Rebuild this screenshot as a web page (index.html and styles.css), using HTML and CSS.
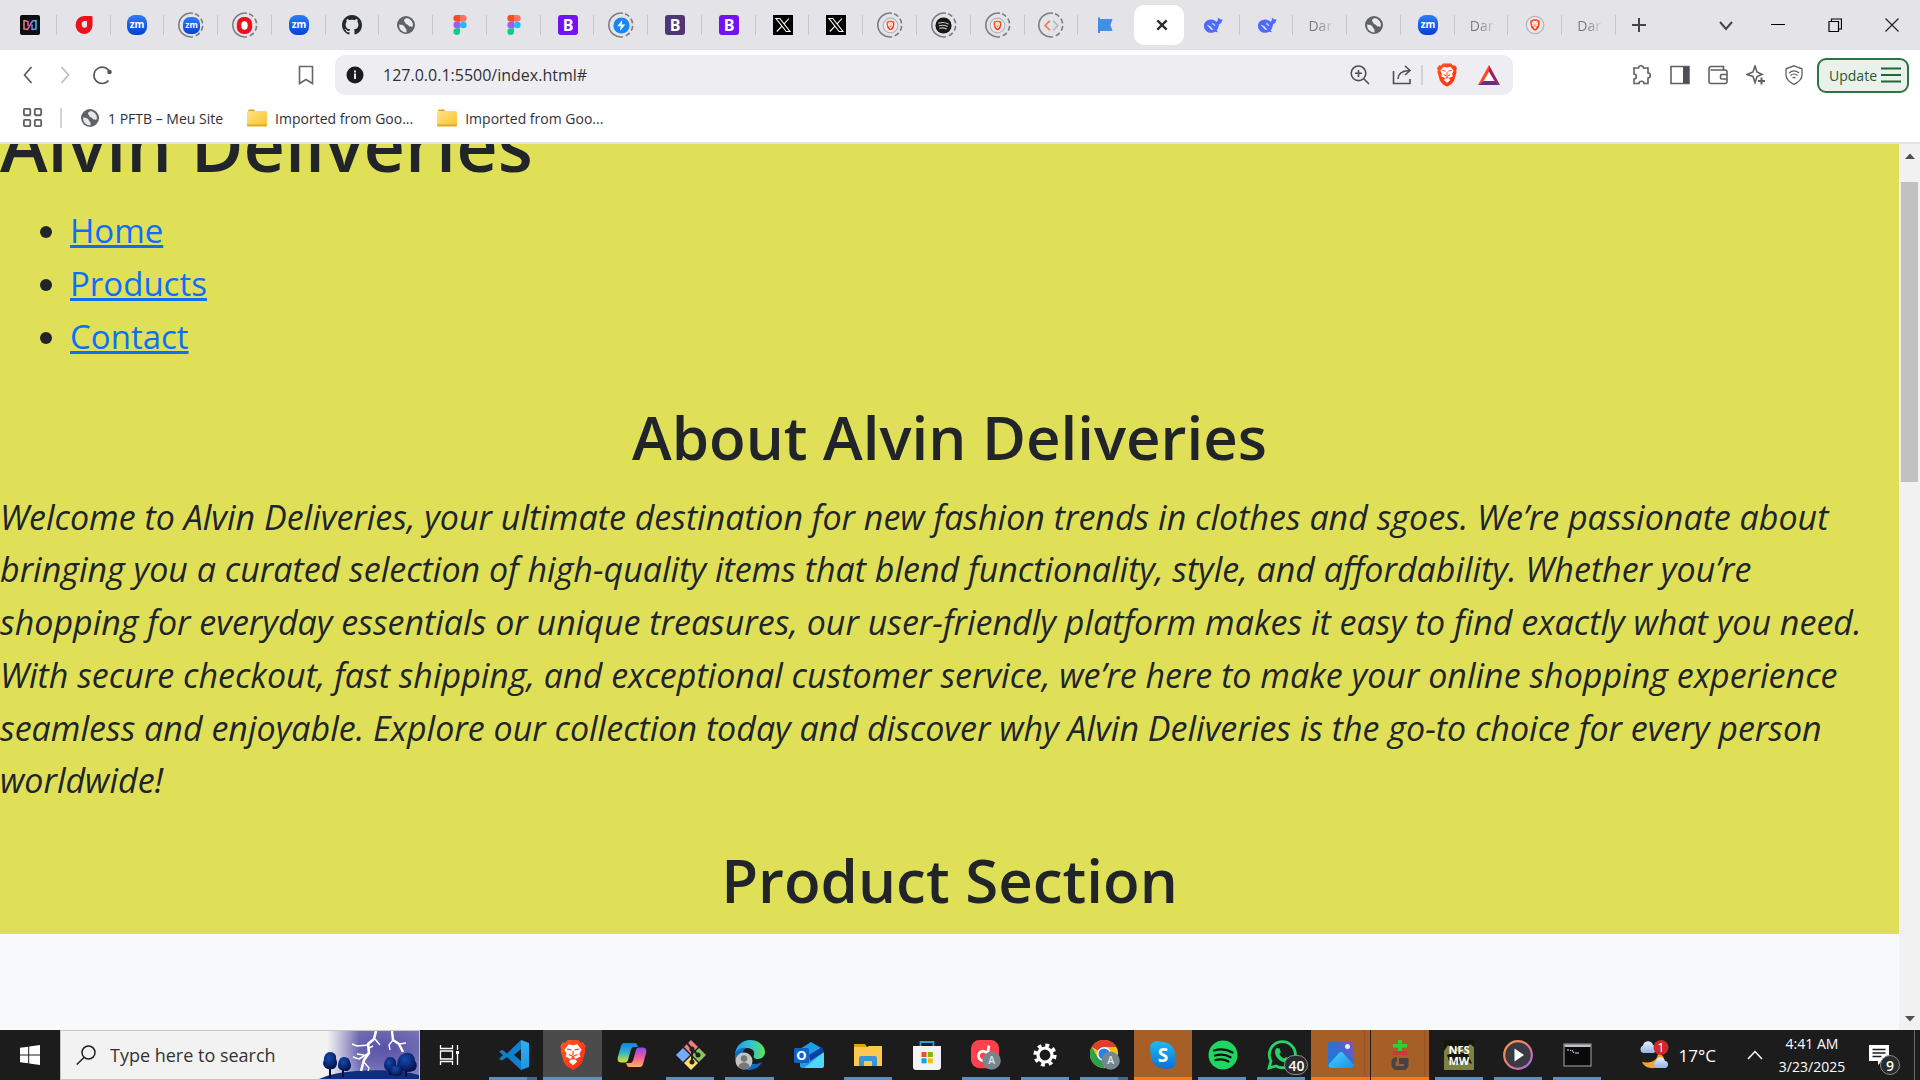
FILE: index.html
```html
<!DOCTYPE html>
<html lang="en">
<head>
<meta charset="utf-8">
<meta name="viewport" content="width=device-width, initial-scale=1">
<title>Alvin Deliveries</title>
<link rel="stylesheet" href="styles.css">
</head>
<body>

<svg class="sprite" aria-hidden="true">
  <defs>
    <linearGradient id="g-zoom" x1="0" y1="0" x2="0" y2="1"><stop offset="0" stop-color="#2d7bff"/><stop offset="1" stop-color="#0542d0"/></linearGradient>
    <linearGradient id="g-hevc" x1="0" y1="0" x2="1" y2="0"><stop offset="0" stop-color="#f5805a"/><stop offset=".5" stop-color="#c05ac8"/><stop offset="1" stop-color="#35c0ea"/></linearGradient>
    <linearGradient id="g-folder" x1="0" y1="0" x2="1" y2="1"><stop offset="0" stop-color="#ffe484"/><stop offset="1" stop-color="#f9c22e"/></linearGradient>
    <linearGradient id="g-brave" x1="0" y1="0" x2="1" y2="1"><stop offset="0" stop-color="#ff5a1f"/><stop offset="1" stop-color="#ff2a12"/></linearGradient>
    <linearGradient id="g-cop1" x1="0" y1="0" x2="0" y2="1"><stop offset="0" stop-color="#1a7bea"/><stop offset=".5" stop-color="#2fb6c9"/><stop offset="1" stop-color="#e8dc2a"/></linearGradient>
    <linearGradient id="g-cop2" x1="0" y1="0" x2="0" y2="1"><stop offset="0" stop-color="#8a4bea"/><stop offset=".5" stop-color="#f05a9a"/><stop offset="1" stop-color="#ffb05a"/></linearGradient>
    <linearGradient id="g-edge" x1="0" y1="0" x2="1" y2="0"><stop offset="0" stop-color="#1c9be8"/><stop offset=".5" stop-color="#2fc3d6"/><stop offset="1" stop-color="#5ee05a"/></linearGradient>
    <linearGradient id="g-skype" x1="0" y1="0" x2="0" y2="1"><stop offset="0" stop-color="#1ebcf5"/><stop offset="1" stop-color="#0a6fd8"/></linearGradient>
    <linearGradient id="g-photo" x1="0" y1="1" x2="1" y2="0"><stop offset="0" stop-color="#1b7ae0"/><stop offset=".5" stop-color="#2f6fd0"/><stop offset="1" stop-color="#8a4fc0"/></linearGradient>
    <linearGradient id="g-mount" x1="0" y1="0" x2="1" y2="1"><stop offset="0" stop-color="#4ad4fa"/><stop offset="1" stop-color="#1a90ea"/></linearGradient>
    <linearGradient id="g-play" x1="0" y1="0" x2="1" y2="1"><stop offset="0" stop-color="#ff9a3c"/><stop offset=".5" stop-color="#e87a7a"/><stop offset="1" stop-color="#a06af0"/></linearGradient>
    <linearGradient id="g-cloud" x1="0" y1="0" x2="0" y2="1"><stop offset="0" stop-color="#e8f0fc"/><stop offset="1" stop-color="#92b4ea"/></linearGradient>
    <linearGradient id="g-vs" x1="0" y1="0" x2="0" y2="1"><stop offset="0" stop-color="#2cb0f5"/><stop offset="1" stop-color="#1f94e0"/></linearGradient>
    <radialGradient id="g-storm" cx=".62" cy=".35" r=".75"><stop offset="0" stop-color="#5a52a8"/><stop offset=".5" stop-color="#6f6ab2"/><stop offset="1" stop-color="#8e8cc6"/></radialGradient>
    <linearGradient id="g-haze" x1="0" y1="0" x2="1" y2="0"><stop offset="0" stop-color="#f2f2f2"/><stop offset=".35" stop-color="#f2f2f2" stop-opacity="0"/></linearGradient>
    <radialGradient id="g-tree" cx=".4" cy=".35" r=".7"><stop offset="0" stop-color="#154bb4"/><stop offset="1" stop-color="#050f44"/></radialGradient>
  </defs>

  <symbol id="ring" viewBox="0 0 26 26"><path d="M15 1.200A12 12 0 1 0 15 24.800" fill="none" stroke="#7c7d82" stroke-width="1.600"/><path d="M17 1.800A12 12 0 0 1 17 24.200" fill="none" stroke="#7c7d82" stroke-width="1.600" stroke-dasharray="5 2.600"/></symbol>
  <symbol id="hevc" viewBox="0 0 20 20"><rect width="20" height="20" rx="2" fill="#0d0d12"/><path d="M8 11V6.500L4 5.500V14l3.500.5L12.500 6l3.500-.5V14l-4 .5V9.500" fill="none" stroke="url(#g-hevc)" stroke-width="1.500" stroke-linejoin="round"/></symbol>
  <symbol id="drop" viewBox="0 0 20 20"><path d="M10 1h7.500a1 1 0 0 1 1 1v9A8.500 9 0 1 1 10 1z" fill="#ee0f1c"/><path d="M11 6h2v5.500a3 3.400 0 1 1-2-5.500z" fill="#e4e3e8"/></symbol>
  <symbol id="ored" viewBox="0 0 20 20"><rect x="1" y="0" width="18" height="20" rx="8" fill="#ee0f1c"/><ellipse cx="10" cy="10" rx="3.800" ry="5" fill="#fff"/></symbol>
  <symbol id="zoom" viewBox="0 0 20 20"><rect width="20" height="20" rx="8" fill="url(#g-zoom)"/></symbol>
  <symbol id="github" viewBox="0 0 16 16"><path fill="#24292f" d="M8 0C3.580 0 0 3.580 0 8c0 3.540 2.290 6.530 5.470 7.590.4.070.55-.17.55-.38 0-.19-.01-.82-.01-1.490-2.010.37-2.530-.49-2.690-.94-.09-.23-.48-.94-.82-1.130-.28-.15-.68-.52-.01-.53.63-.01 1.080.58 1.230.82.72 1.210 1.870.87 2.330.66.07-.52.28-.87.51-1.070-1.780-.2-3.640-.89-3.640-3.950 0-.87.31-1.590.82-2.150-.08-.2-.36-1.020.08-2.120 0 0 .67-.21 2.200.82.64-.18 1.320-.27 2-.27s1.360.09 2 .27c1.530-1.040 2.200-.82 2.200-.82.44 1.100.16 1.920.08 2.120.51.56.82 1.270.82 2.150 0 3.070-1.870 3.750-3.650 3.950.29.25.54.73.54 1.480 0 1.070-.01 1.930-.01 2.200 0 .21.15.46.55.38A8.010 8.010 0 0 0 16 8c0-4.420-3.580-8-8-8z"/></symbol>
  <symbol id="globe" viewBox="0 0 20 20"><circle cx="10" cy="10" r="9" fill="#5f6368"/><path d="M3 9.500c3 .2 5.500 1 6 3 .3 1.300 1.500 1 1.500 2.500v2.500A7.500 7.500 0 0 1 3 9.500zM10.500 3c-1 1-2.500 1-2.500 2.500S9.500 7 9.500 8.200 12 9 12.500 10.500s2.500.5 3.500 1.500l1-1.500A7.500 7.500 0 0 0 10.500 3z" fill="#e8e7ec"/></symbol>
  <symbol id="figma" viewBox="0 0 14 20"><path d="M7 0H3.700a3.300 3.300 0 0 0 0 6.700H7z" fill="#f24e1e"/><path d="M7 0h3.300a3.300 3.300 0 0 1 0 6.700H7z" fill="#ff7262"/><path d="M7 6.700H3.700a3.300 3.300 0 0 0 0 6.600H7z" fill="#a259ff"/><circle cx="10.300" cy="10" r="3.300" fill="#1abcfe"/><path d="M7 13.300H3.700A3.300 3.300 0 1 0 7 16.700z" fill="#0acf83"/></symbol>
  <symbol id="bolt" viewBox="0 0 20 20"><circle cx="10" cy="10" r="9.500" fill="#1687f8"/><path d="M11 3.500L5 11h4.200L8 16.500l6.500-7.800h-4.300z" fill="#fff"/></symbol>
  <symbol id="x" viewBox="0 0 20 20"><rect width="20" height="20" fill="#000"/><path d="M3 3.500h3.800L17 16.500h-3.800zM16 3.500l-5.200 5.700M9 11.200l-5.200 5.300" fill="none" stroke="#fff" stroke-width="1.100"/></symbol>
  <symbol id="brave-face" viewBox="0 0 24 28"><path d="M12 0h5l2 2.500 2.500-.3L24 6l-1 2.500.5 2-3 10.500-3.500 4-5 3-5-3-3.500-4L.5 10.500l.5-2L0 6l2.500-3.800 2.500.3L7 0z" fill="url(#g-brave)"/><path d="M12 5l4-1 4 5-2 3.500 1 3-5 2.500 2 2-4 3.500L8 20l2-2-5-2.500 1-3L4 9l4-5z" fill="#fff"/><path d="M6.500 8.500l4 .8M17.500 8.500l-4 .8M12 10v4M8 13.500l4 2 4-2M10.500 17.500L12 16l1.500 1.500z" stroke="#ff4a1c" stroke-width="1.200" fill="none"/></symbol>
  <symbol id="brave-ring" viewBox="0 0 20 20"><circle cx="10" cy="10" r="8.700" fill="#e9eaee" stroke="#b3b5bd" stroke-width="1.300"/><use href="#brave-face" x="5" y="4" width="10" height="12"/></symbol>
  <symbol id="spotify-dark" viewBox="0 0 20 20"><circle cx="10" cy="10" r="9.500" fill="#161616"/><path d="M4.500 7.200c4-1.200 8-.8 11 1M5 10.300c3.500-1 7-.6 9.500.9M5.500 13.200c3-.8 5.500-.4 8 .8" stroke="#c9c9cd" stroke-width="1.300" fill="none" stroke-linecap="round"/></symbol>
  <symbol id="code" viewBox="0 0 20 20"><path d="M8 4.500L2.500 10 8 15.500" stroke="#ee7b4c" stroke-width="2" fill="none"/><path d="M12 4.500l5.500 5.500-5.500 5.500" stroke="#b9b9bf" stroke-width="2" fill="none"/></symbol>
  <symbol id="flag" viewBox="0 0 20 20"><path d="M3 2.500h2V4h12.500L15.500 10l2 6H5v2H3z" fill="#4090e8"/></symbol>
  <symbol id="whale" viewBox="0 0 22 20"><path d="M21.500 3.500c-1.500.8-2.500.3-3.500-.5-1-.9-1.800-1-1.800-1s.6 3.500-1.200 4.500c-1.500-1.300-3.500-2.500-6-2.500C4 4 1 7.500 1 11s3 7.500 7.500 7.500c2 0 3.500-.5 4.500-1.200l3.500.7-1.500-2.300c1.500-1.700 2.500-4 2.500-6.200 2-.5 3.500-2.500 4-6z" fill="#4d6bfe"/><path d="M4 10c2.500-.3 4.500 1.500 5.500 3s1.500 2 2.200 2.300c-2.200.7-3.700-.8-4.700-2.300S5 11 4 10z" fill="#e4e3e8"/><path d="M10 8.500c1.500 0 2.500 1 3 2.500" stroke="#e4e3e8" stroke-width="1.200" fill="none"/></symbol>
  <symbol id="folder" viewBox="0 0 20 18"><path d="M1 2a1.500 1.500 0 0 1 1.500-1.500H7L9 3h-8z" fill="#dca01c"/><rect x="0" y="2" width="20" height="15" rx="1.500" fill="url(#g-folder)"/><path d="M0 15.500h20v.8a1.300 1.300 0 0 1-1.300 1.300H1.300A1.300 1.300 0 0 1 0 16.300z" fill="#e0a928"/></symbol>
</svg>

<header class="browser">
  <div class="tabstrip">
    <nav class="tabs" aria-label="Open tabs">
      <button class="tab"><svg class="fav"><use href="#hevc"/></svg></button>
      <button class="tab"><svg class="fav"><use href="#drop"/></svg></button>
      <button class="tab"><svg class="fav" viewBox="0 0 20 20"><use href="#zoom"/><text x="10" y="13" class="zm">zm</text></svg></button>
      <button class="tab asleep"><svg class="fav" viewBox="0 0 20 20"><use href="#zoom"/><text x="10" y="13" class="zm">zm</text></svg><svg class="ring"><use href="#ring"/></svg></button>
      <button class="tab asleep"><svg class="fav"><use href="#ored"/></svg><svg class="ring"><use href="#ring"/></svg></button>
      <button class="tab"><svg class="fav" viewBox="0 0 20 20"><use href="#zoom"/><text x="10" y="13" class="zm">zm</text></svg></button>
      <button class="tab"><svg class="fav"><use href="#github"/></svg></button>
      <button class="tab"><svg class="fav"><use href="#globe"/></svg></button>
      <button class="tab"><svg class="fav"><use href="#figma"/></svg></button>
      <button class="tab"><svg class="fav"><use href="#figma"/></svg></button>
      <button class="tab"><svg class="fav" viewBox="0 0 20 20"><rect width="20" height="20" rx="3" fill="#7411f5"/><text x="10" y="16" class="letter-b">B</text></svg></button>
      <button class="tab asleep"><svg class="fav"><use href="#bolt"/></svg><svg class="ring"><use href="#ring"/></svg></button>
      <button class="tab"><svg class="fav" viewBox="0 0 20 20"><rect width="20" height="20" rx="3" fill="#503675"/><text x="10" y="16" class="letter-b">B</text></svg></button>
      <button class="tab"><svg class="fav" viewBox="0 0 20 20"><rect width="20" height="20" rx="3" fill="#7411f5"/><text x="10" y="16" class="letter-b">B</text></svg></button>
      <button class="tab"><svg class="fav"><use href="#x"/></svg></button>
      <button class="tab"><svg class="fav"><use href="#x"/></svg></button>
      <button class="tab asleep"><svg class="fav"><use href="#brave-ring"/></svg><svg class="ring"><use href="#ring"/></svg></button>
      <button class="tab asleep"><svg class="fav"><use href="#spotify-dark"/></svg><svg class="ring"><use href="#ring"/></svg></button>
      <button class="tab asleep"><svg class="fav"><use href="#brave-ring"/></svg><svg class="ring"><use href="#ring"/></svg></button>
      <button class="tab asleep"><svg class="fav"><use href="#code"/></svg><svg class="ring"><use href="#ring"/></svg></button>
      <button class="tab bare"><svg class="fav"><use href="#flag"/></svg></button>
      <button class="tab active" aria-label="Close tab"><svg class="close" viewBox="0 0 12 12"><path d="M2 2l8 8M10 2l-8 8"/></svg></button>
      <button class="tab"><svg class="fav"><use href="#whale"/></svg></button>
      <button class="tab"><svg class="fav"><use href="#whale"/></svg></button>
      <button class="tab"><span class="tab-title">Dar</span></button>
      <button class="tab"><svg class="fav"><use href="#globe"/></svg></button>
      <button class="tab"><svg class="fav" viewBox="0 0 20 20"><use href="#zoom"/><text x="10" y="13" class="zm">zm</text></svg></button>
      <button class="tab"><span class="tab-title">Dar</span></button>
      <button class="tab"><svg class="fav"><use href="#brave-ring"/></svg></button>
      <button class="tab"><span class="tab-title">Dar</span></button>
    </nav>
    <div class="window-controls">
      <button class="new-tab" aria-label="New tab"><svg viewBox="0 0 14 14"><path d="M7 0v14M0 7h14" stroke="#44454a" stroke-width="2"/></svg></button>
      <button class="tab-search" aria-label="Search tabs"><svg viewBox="0 0 14 14"><path d="M1 4l6 7 6-7" fill="none" stroke="#44454a" stroke-width="2"/></svg></button>
      <button class="win" aria-label="Minimize"><svg viewBox="0 0 14 14"><path d="M0 6.500h14" stroke="#000" stroke-width="1"/></svg></button>
      <button class="win" aria-label="Restore"><svg viewBox="0 0 14 14"><path d="M1 3.500h9.500v10H1zM3.500 3V1h10v10H11" fill="none" stroke="#000" stroke-width="1.200"/></svg></button>
      <button class="win" aria-label="Close"><svg viewBox="0 0 14 14"><path d="M.5.500l13 13M13.500.500l-13 13" stroke="#222" stroke-width="1.200"/></svg></button>
    </div>
  </div>

  <div class="toolbar">
    <div class="nav-buttons">
      <button class="tool" aria-label="Back"><svg viewBox="0 0 20 20"><path d="M13.500 2L6.500 10l7 8" stroke="#55565c"/></svg></button>
      <button class="tool" aria-label="Forward"><svg viewBox="0 0 20 20"><path d="M6.500 2l7 8-7 8" stroke="#b9b9bf"/></svg></button>
      <button class="tool" aria-label="Reload"><svg viewBox="0 0 20 20"><path d="M16.500 15.500A8.200 8.200 0 1 1 18 8" stroke="#55565c"/><circle cx="17.500" cy="7" r="2.300" fill="#55565c" stroke="none"/></svg></button>
    </div>
    <button class="tool bookmark" aria-label="Bookmark this page"><svg viewBox="0 0 20 20"><path d="M3.500 1.500h13V18.500L10 14.500l-6.500 4z" stroke="#66676d"/></svg></button>
    <div class="omnibox">
      <svg class="info" viewBox="0 0 18 18"><circle cx="9" cy="9" r="8.500" fill="#1b1b20"/><path d="M9 7.500V13M9 4.500v2" stroke="#fff" stroke-width="1.800"/></svg>
      <input type="text" aria-label="Address" value="127.0.0.1:5500/index.html#">
      <button class="tool" aria-label="Zoom"><svg viewBox="0 0 20 20"><path d="M13.500 13.500L19 19M8.500 1a7.300 7.300 0 1 1 0 14.600A7.300 7.300 0 0 1 8.500 1zM5 8.300h7M8.500 5v7" stroke="#4e4f56"/></svg></button>
      <button class="tool" aria-label="Share"><svg viewBox="0 0 20 20"><path d="M1.500 6v12.500h16.500V14M6 14c0-5 3-8 11-8.500M13 1l5 4.500-5 4.500" stroke="#4e4f56"/></svg></button>
      <span class="rule"></span>
      <button class="tool shield" aria-label="Brave Shields"><svg viewBox="0 0 24 28"><use href="#brave-face"/></svg></button>
      <button class="tool bat" aria-label="Rewards"><svg viewBox="0 0 22 20"><path d="M11 0L0 20l6-3.500L11 7z" fill="#ff4724"/><path d="M11 0l11 20-6-3.500L11 7z" fill="#9e1f63"/><path d="M0 20h22l-6-4H6z" fill="#662d91"/><path d="M11 7l5.500 9h-11z" fill="#fff"/></svg></button>
    </div>
    <div class="extensions">
      <button class="tool" aria-label="Extensions"><svg viewBox="0 0 20 20"><path d="M2 3h4.500c0-3 5-3 5 0H16v5c3 0 3 5 0 5v5.500h-4c0-3-5-3-5 0H2V14c3 0 3-5 0-5z" stroke="#5f6067"/></svg></button>
      <button class="tool" aria-label="Sidebar"><svg viewBox="0 0 20 20"><path d="M1 1.500h18v17H1z" stroke="#5f6067"/><path d="M13 2h6v16h-6z" fill="#4f5057" stroke="none"/></svg></button>
      <button class="tool" aria-label="Wallet"><svg viewBox="0 0 20 20"><path d="M1 5v11.500a2 2 0 0 0 2 2h14a2 2 0 0 0 2-2V7a2 2 0 0 0-2-2H2.500M1 5V3.500a2 2 0 0 1 2-2h12.500V5M19 9.500h-5a1.500 1.500 0 0 0-1.500 1.500v1.500A1.500 1.500 0 0 0 14 14h5" stroke="#5f6067"/></svg></button>
      <button class="tool" aria-label="Leo"><svg viewBox="0 0 20 20"><path d="M9 1l2 6 5 2.500-5 2L9 17.500l-2-6-6-2L7 7z" stroke="#5f6067"/><path d="M15.500 12.500v7M12 16h7" stroke="#5f6067" stroke-width="2"/></svg></button>
      <button class="tool" aria-label="VPN"><svg viewBox="0 0 20 20"><path d="M10 .8l8 3v6c0 4.500-3.500 7.500-8 9.500-4.500-2-8-5-8-9.500v-6zM5 8c3-2.500 7-2.500 10 0M6.500 10.500c2-1.800 5-1.800 7 0M8.500 13c1-.8 2-.8 3 0" stroke="#5f6067" stroke-width="1.300"/></svg></button>
      <button class="update">Update<svg viewBox="0 0 20 16"><path d="M0 1.500h20M0 8h20M0 14.500h20" stroke="#1d6b32" stroke-width="2"/></svg></button>
    </div>
  </div>

  <nav class="bookmarks" aria-label="Bookmarks">
    <button class="apps" aria-label="Apps"><svg viewBox="0 0 22 22"><g fill="none" stroke="#5f6067" stroke-width="2"><rect x="1" y="1" width="7" height="7" rx="1"/><rect x="13" y="1" width="7" height="7" rx="1"/><rect x="1" y="13" width="7" height="7" rx="1"/><rect x="13" y="13" width="7" height="7" rx="1"/></g></svg></button>
    <span class="rule"></span>
    <a href="#"><svg><use href="#globe"/></svg>1 PFTB – Meu Site</a>
    <a href="#"><svg><use href="#folder"/></svg>Imported from Goo...</a>
    <a href="#"><svg><use href="#folder"/></svg>Imported from Goo...</a>
  </nav>
</header>

<div class="viewport">
  <main class="page">
    <div class="intro">
      <h1>Alvin Deliveries</h1>
      <ul>
        <li><a href="#">Home</a></li>
        <li><a href="#">Products</a></li>
        <li><a href="#">Contact</a></li>
      </ul>
      <h2>About Alvin Deliveries</h2>
      <p>Welcome to Alvin Deliveries, your ultimate destination for new fashion trends in clothes and sgoes. We’re passionate about bringing you a curated selection of high-quality items that blend functionality, style, and affordability. Whether you’re shopping for everyday essentials or unique treasures, our user-friendly platform makes it easy to find exactly what you need. With secure checkout, fast shipping, and exceptional customer service, we’re here to make your online shopping experience seamless and enjoyable. Explore our collection today and discover why Alvin Deliveries is the go-to choice for every person worldwide!</p>
      <h2>Product Section</h2>
    </div>
  </main>
  <div class="scrollbar" aria-hidden="true">
    <svg viewBox="0 0 10 6"><path d="M0 6l5-5.500L10 6z"/></svg>
    <div class="track"><div class="thumb"></div></div>
    <svg viewBox="0 0 10 6"><path d="M0 0l5 5.500L10 0z"/></svg>
  </div>
</div>

<footer class="taskbar">
  <button class="start" aria-label="Start"><svg viewBox="0 0 20 20"><path d="M0 2.800L8.200 1.700v7.800H0zM9.200 1.500L20 0v9.500H9.200zM0 10.500h8.200v7.800L0 17.200zM9.200 10.500H20V20L9.200 18.500z" fill="#fff"/></svg></button>
  <label class="search">
    <svg class="lens" viewBox="0 0 20 20"><circle cx="12.500" cy="7.500" r="6.500" fill="none" stroke="#222" stroke-width="1.500"/><path d="M8 12.500L.8 19.500" stroke="#222" stroke-width="1.500"/></svg>
    <input type="text" placeholder="Type here to search" aria-label="Search">
    <svg class="storm" viewBox="0 0 100 48">
      <rect x="8" width="92" height="48" fill="url(#g-storm)"/><rect x="8" width="92" height="48" fill="url(#g-haze)"/>
      <path d="M0 48c22-11 78-11 100-4v4z" fill="#0c2e80"/>
      <g fill="none" stroke="#fff" stroke-linejoin="round"><path d="M57 0l-2 8-6 5 1 9-5 7-3 11" stroke-width="2.600"/><path d="M50 14l-12 1-5-2M50 22l-10 6-6-2M45 24l-7-1M56 8l5 6M50 17l4-2" stroke-width="1.500"/><path d="M44 30l6 7-1 3" stroke-width="1.200"/><path d="M73 0l1 9 6 4 4 8" stroke-width="2.400"/><path d="M74 9l-4 5 1 5M80 13l7-1" stroke-width="1.300"/></g>
      <path d="M11 36v11M24 38v8M71 38v6M87 38v8" stroke="#040b30" stroke-width="2"/>
      <g fill="url(#g-tree)"><path d="M11 21c4 0 7 3 6 7 2 3 1 9-3 10-3 1-8 0-9-3-2-3 0-5 0-7 0-4 3-7 6-7z"/><path d="M25 26c4 0 6 3 6 5 2 3 1 8-3 9-4 0-9-1-9-5 0-5 2-9 6-9z"/><path d="M71 26c4 0 6 3 6 6s1 8-4 9c-5 0-8-3-8-7 0-3 2-8 6-8z"/><path d="M87 22c6-1 9 4 9 8 3 3 2 9-2 10-5 2-13 1-15-3-2-5 0-14 8-15z"/><path d="M77 34c4-1 7 2 7 5s-2 6-6 6-7-2-7-5 2-6 6-6z"/></g>
    </svg>
  </label>
  <button class="task-view" aria-label="Task view"><svg viewBox="0 0 22 20"><path d="M1.500 0v3.500h12V0M1.500 20v-3.500h12V20M1.500 6h12v8h-12zM18.500 0v5M18.500 9v11" fill="none" stroke="#fff" stroke-width="1.300"/><path d="M17 6h3v3h-3z" fill="#fff"/></svg></button>

  <nav class="apps-row" aria-label="Running apps">
    <button class="app open stacked" aria-label="Visual Studio Code"><svg viewBox="0 0 30 30"><path d="M22 0l-14 13.500-4.500-3.500L0 11.500 4 15l-4 4 3 1.500L8 17l14 13v-9l-7-6 7-6z" fill="#1180cc"/><path d="M22 0l8 3v24l-8 3z" fill="url(#g-vs)"/></svg></button>
    <button class="app open current" aria-label="Brave"><svg viewBox="0 0 24 28"><use href="#brave-face"/></svg></button>
    <button class="app" aria-label="Copilot"><svg viewBox="0 0 30 30"><path d="M7 3h11c2 0 2 2 3 4h-4c-2 0-3 2-3.500 4l-2.500 9c-.5 2-2 2.500-4 2.500H4c-3 0-4-3-3-6L4 6c.5-2 1.500-3 3-3z" fill="url(#g-cop1)"/><path d="M23 27H12c-2 0-2-2-3-4h4c2 0 3-2 3.500-4l2.500-9c.5-2 2-2.500 4-2.500h3c3 0 4 3 3 6L26 24c-.5 2-1.500 3-3 3z" fill="url(#g-cop2)"/></svg></button>
    <button class="app open" aria-label="Git Bash"><svg viewBox="0 0 30 30"><path d="M15 0l7 7-7 7-7-7z" fill="#f17c80"/><path d="M7 8l7 7-7 7-7-7z" fill="#79a9f9"/><path d="M23 8l7 7-7 7-7-7z" fill="#88c659"/><path d="M15 16l7 7-7 7-7-7z" fill="#fadf6e"/><path d="M11 3l5 6v14M16 9l6 6" stroke="#222" stroke-width="2" fill="none"/><circle cx="16" cy="9" r="2.500" fill="#222"/><circle cx="22" cy="15" r="2.500" fill="#222"/><circle cx="16" cy="22" r="2.500" fill="#222"/></svg></button>
    <button class="app open" aria-label="Edge"><svg viewBox="0 0 30 30"><path d="M0 14C1 5 8 0 15 0c9 0 15 6 15 12 0 5-4 7-7 7-4 0-5-2-4-4 1-4-2-7-7-7C6 8 2 11 0 14z" fill="url(#g-edge)"/><path d="M0 15c1-5 6-8 11-7-4 2-4 8-1 12 4 5 12 5 17 2-3 6-9 8-13 8C6 30-1 23 0 15z" fill="#0f6cc0"/><circle cx="9" cy="21" r="8.500" fill="#c4c4c4"/><circle cx="9" cy="18.500" r="3.200" fill="#777"/><path d="M3.500 27c0-6 11-6 11 0-3 3-8 3-11 0z" fill="#777"/></svg></button>
    <button class="app" aria-label="Outlook"><svg viewBox="0 0 30 30"><path d="M6 9L17 2l12 7v17a2 2 0 0 1-2 2H8a2 2 0 0 1-2-2z" fill="#1b9de8"/><path d="M30 12v14a2 2 0 0 1-2 2H10z" fill="#4fd6fa"/><path d="M15 15L28 7l2 5-14 9z" fill="#0b3f9e"/><rect x="0" y="8" width="15" height="15" rx="1.500" fill="#0f62c8"/><text x="7.500" y="20" class="app-letter">O</text></svg></button>
    <button class="app open" aria-label="File Explorer"><svg viewBox="0 0 30 30"><path d="M1 4h11l2 3h-13z" fill="#e0a010"/><path d="M1 7h13l2-1h13v20H1z" fill="#fcc94e"/><path d="M6 26V18a2 2 0 0 1 2-2h14a2 2 0 0 1 2 2v8h-5v-5h-8v5z" fill="#3c94d8"/></svg></button>
    <button class="app" aria-label="Store"><svg viewBox="0 0 30 30"><path d="M8.500 7V2h13v5" fill="none" stroke="#2a9fe0" stroke-width="1.800"/><path d="M1 6h28v21a3 3 0 0 1-3 3H4a3 3 0 0 1-3-3z" fill="#f3f3f3"/><path d="M9.500 12h5v5h-5z" fill="#f25022"/><path d="M15.800 12h5v5h-5z" fill="#7fba00"/><path d="M9.500 18.300h5v5h-5z" fill="#00a4ef"/><path d="M15.800 18.300h5v5h-5z" fill="#ffb900"/></svg></button>
    <button class="app open" aria-label="Deliveries app"><svg viewBox="0 0 32 32"><rect x="0" y="0" width="30" height="30" rx="9" fill="#ff414d"/><path d="M19 6l-2 15M17 14a5 5 0 1 0-1 7" fill="none" stroke="#fff" stroke-width="3"/><circle cx="22" cy="22" r="9.800" fill="#76868f"/><text x="22" y="26" class="badge-letter">A</text></svg></button>
    <button class="app open" aria-label="Settings"><svg class="gear" viewBox="0 0 24 24"><circle cx="12" cy="12" r="7" fill="none" stroke="#fff" stroke-width="3.200"/><circle cx="12" cy="12" r="9.800" fill="none" stroke="#fff" stroke-width="3.600" stroke-dasharray="3.850 3.850"/></svg></button>
    <button class="app open stacked" aria-label="Chrome"><svg viewBox="0 0 32 32"><circle cx="15" cy="15" r="15" fill="#fbc116"/><path d="M15 15L2 7.500A15 15 0 0 1 28 7.500H15z" fill="#e33b2e"/><path d="M2 7.500A15 15 0 0 0 15 30l6.500-11.200L8.500 18.800z" fill="#2da14c"/><circle cx="15" cy="15" r="7.500" fill="#fff"/><circle cx="15" cy="15" r="6" fill="#2f7de8"/><circle cx="22" cy="22" r="9.800" fill="#76868f"/><text x="22" y="26" class="badge-letter">A</text></svg></button>
    <button class="app alert" aria-label="Skype"><svg viewBox="0 0 30 30"><path d="M9 1c2 0 3 1 5 1 8 0 13 6 13 12 0 2 1 4 1 7 0 5-4 8-8 8-2 0-3-.6-5-.6C8 28 3 22 3 16c0-2-1-4-1-7 0-5 3-8 7-8z" fill="url(#g-skype)"/><text x="15" y="22" class="skype-letter">S</text></svg></button>
    <button class="app open" aria-label="Spotify"><svg viewBox="0 0 30 30"><circle cx="15" cy="15" r="14.500" fill="#1ed760"/><path d="M6 10.500c6-1.800 13-1.200 18.500 2M7 15.500c5-1.500 11-1 15.500 1.700M7.500 20c4.500-1.200 9-.8 13 1.500" stroke="#111" stroke-width="2.300" fill="none" stroke-linecap="round"/></svg></button>
    <button class="app open" aria-label="WhatsApp"><svg viewBox="0 0 30 30"><path d="M2 28l2-7A13 13 0 1 1 9 26z" fill="none" stroke="#25d366" stroke-width="2.800"/><path d="M10 8l2.500.5 1.300 3.500-1.300 2c1 2 2.500 3.500 4.500 4.500l2-1.500 3.300 1.500c0 2.500-2 4-4.300 4C13 22 8 16.500 8 12c0-2 1-3.500 2-4z" fill="#25d366"/></svg><span class="count">40</span></button>
    <button class="app alert stacked" aria-label="Photos"><svg viewBox="0 0 30 30"><rect x="2" y="2" width="26" height="26" rx="3" fill="url(#g-photo)"/><path d="M3 24l10-11c1-1.500 3-1.500 4 0l11 12a3 3 0 0 1-3 3H5c-2 0-3-2-2-4z" fill="url(#g-mount)"/><circle cx="21.500" cy="6.500" r="2.500" fill="#e8f0ff"/></svg></button>
    <button class="app alert stacked" aria-label="Git GUI"><svg viewBox="0 0 30 30"><path d="M13 0h4v4h5v3.500h-5V11h-4V7.500H8V4h5z" fill="#2fcf35"/><path d="M8 11h14v4H8z" fill="#d0373c"/><path d="M12 17.500H9L6.500 20v6.500L9.500 30h11l3-3.500V18H14v6h5v2h-8.500v-4.500H12z" fill="#454545"/></svg></button>
    <button class="app open" aria-label="NFS MW"><svg viewBox="0 0 30 30"><rect width="30" height="30" fill="#7d8244"/><path d="M0 0h30v7l-4-3-5 6-6-4-6 5-5-6-4 6zM3 15l9-4 12 3 4 10-8-4-6 4-9-3z" fill="#14160e"/><text x="15" y="14" class="nfs">NFS</text><text x="15" y="25" class="nfs">MW</text></svg></button>
    <button class="app open" aria-label="Media Player"><svg viewBox="0 0 30 30"><circle cx="15" cy="15" r="13.800" fill="#3a3a42" stroke="url(#g-play)" stroke-width="2.200"/><path d="M11.500 8.500L21 15l-9.500 6.500z" fill="#fff"/></svg></button>
    <button class="app open" aria-label="Command Prompt"><svg viewBox="0 0 30 30"><rect x="2" y="4" width="27" height="22" fill="#0a0a0a" stroke="#8c8f94" stroke-width="1.200"/><path d="M2.500 4.500h26v2.500h-26z" fill="#bfc3c9"/><path d="M5 10h2M8 10.500h1M10 10l2 3M13 13h4" stroke="#ddd" stroke-width="1"/></svg></button>
  </nav>

  <div class="tray">
    <button class="weather"><svg viewBox="0 0 30 30"><path d="M19 13c0 6-5 11-16 9 4 9 19 8 22-2 0-4-3-6-6-7z" fill="#f5a52c"/><path d="M4 13a4 4 0 0 1 0-7.500C5 0 13 0 14 5c4 0 4 8 0 8z" fill="url(#g-cloud)"/><path d="M17 28a4 4 0 0 1 0-7c1-5 8-5 9 0 4 0 4 7 0 7z" fill="url(#g-cloud)"/><circle cx="22" cy="7.500" r="7.500" fill="#d0282a"/><text x="22" y="12" class="alert-num">1</text></svg>17°C</button>
    <button class="caret" aria-label="Show hidden icons"><svg viewBox="0 0 16 10"><path d="M1 9l7-7.500L15 9" fill="none" stroke="#fff" stroke-width="1.500"/></svg></button>
    <button class="clock"><span>4:41 AM</span><span>3/23/2025</span></button>
    <button class="notes" aria-label="Notifications"><svg viewBox="0 0 20 20"><path d="M0 0h20v16h-7l-4 4v-4H0z" fill="#fff"/><path d="M3.500 4.500h13M3.500 8h13M3.500 11.500h9" stroke="#1c1c1c" stroke-width="1.300"/></svg><span class="count">9</span></button>
    <span class="peek"></span>
  </div>
</footer>
</body>
</html>
```
FILE: styles.css
```css
* { box-sizing: border-box; }

body {
  margin: 0;
  height: 100vh;
  display: flex;
  flex-direction: column;
  overflow: hidden;
  font-family: "Segoe UI", "Open Sans", sans-serif;
  font-size: 14px;
  color: #212529;
}

button {
  display: flex;
  align-items: center;
  justify-content: center;
  padding: 0;
  border: 0;
  background: none;
  font: inherit;
  color: inherit;
}

input {
  min-width: 0;
  padding: 0;
  border: 0;
  outline: 0;
  background: none;
  font: inherit;
}

.sprite { position: absolute; width: 0; height: 0; }

/* Tab strip */
.browser { flex: none; background: #fff; border-bottom: 2px solid #e2e1e8; }

.tabstrip { display: flex; height: 50px; padding-left: 3px; background: #e4e3e8; }

.tabs {
  flex: 1;
  display: grid;
  grid-template-columns: repeat(30, minmax(0, 1fr));
}

.tab { position: relative; }
.tab::after {
  content: "";
  position: absolute;
  right: 0;
  top: 15px;
  width: 1px;
  height: 20px;
  background: #c8c7cd;
}
.tab.bare::after, .tab.active::after { display: none; }
.tab.active { margin: 5px 2px; padding-left: 6px; border-radius: 10px; background: #fff; }
.fav { width: 20px; height: 20px; }
.asleep .fav { width: 17px; height: 17px; }
.ring { position: absolute; width: 26px; height: 26px; }
.close { width: 14px; height: 14px; stroke: #2c2d32; stroke-width: 2; }
.tab-title {
  color: transparent;
  background: linear-gradient(90deg, #77787e 40%, #d0cfd5);
  background-clip: text;
}

.window-controls { flex: none; display: flex; width: 304px; }
.window-controls svg { width: 14px; height: 14px; }
.new-tab { width: 46px; margin-right: auto; }
.tab-search { width: 46px; }
.win { width: 57px; }

/* Toolbar */
.toolbar { display: flex; align-items: center; height: 50px; padding: 0 11px 0 9px; }
.tool { flex: none; width: 38px; height: 38px; }
.tool svg { width: 20px; height: 20px; fill: none; stroke-width: 1.600; }
.nav-buttons { display: flex; }
.nav-buttons .tool { width: 37px; }
.bookmark { margin: 0 10px 0 auto; }

.omnibox {
  flex: none;
  display: flex;
  align-items: center;
  width: 62%;
  height: 40px;
  padding: 0 5px 0 11px;
  border-radius: 10px;
  background: #eeedf2;
}
.omnibox input { flex: 1; margin-left: 19px; font-size: 16px; color: #303138; }
.info { width: 18px; height: 18px; }
.omnibox .tool + .tool { margin-left: 4px; }
.rule { width: 2px; height: 20px; background: #d3d2d8; }
.omnibox .rule { margin-right: 5px; }
.shield svg { width: 20px; height: 24px; }
.bat svg { width: 22px; height: 20px; }

.extensions { display: flex; align-items: center; margin-left: 110px; }
.update {
  height: 35px;
  margin-left: 4px;
  padding: 0 6px 0 10px;
  gap: 4px;
  border: 2px solid #2f7440;
  border-radius: 9px;
  background: #eaf0eb;
  color: #1d5c2c;
}
.update svg { width: 20px; height: 16px; }

/* Bookmarks bar */
.bookmarks { display: flex; align-items: center; height: 42px; padding: 0 23px 6px; color: #303138; }
.bookmarks svg { flex: none; width: 20px; height: 20px; }
.bookmarks .rule { margin: 0 18px 0 17px; }
.bookmarks a {
  display: flex;
  align-items: center;
  gap: 8px;
  margin-right: 24px;
  color: inherit;
  text-decoration: none;
}

/* Scrolled page */
.viewport { flex: 1; min-height: 0; display: flex; overflow: hidden; background: #f8f9fa; }
.page { flex: 1; min-width: 0; }
.intro { display: flow-root; margin-top: -43px; background: #dfe057; }

h1, h2 { margin: 0; font-weight: 600; line-height: 1.2; }
h1 { margin-bottom: 18px; font-size: 72px; }
h2 { margin-bottom: 18px; font-size: 60px; text-align: center; }
.page ul { margin: 0 0 37px; padding-left: 70px; font-size: 33px; line-height: 1.6; }
.page ul a { color: #0d6efd; }
.page p { margin: 0 0 37px; padding-right: 24px; font-size: 34px; font-style: italic; line-height: 1.55; }

.scrollbar {
  flex: none;
  display: flex;
  flex-direction: column;
  align-items: center;
  width: 21px;
  padding: 9px 0 8px;
  background: #f1f1f1;
}
.scrollbar svg { width: 10px; height: 6px; fill: #505050; }
.track { flex: 1; align-self: stretch; padding: 23px 2px 0; }
.thumb { height: 36%; background: #c1c1c1; }

/* Taskbar */
.taskbar { flex: none; display: flex; height: 50px; background: #1c1c1c; color: #fff; }
.start, .task-view { flex: none; width: 60px; }
.start svg { width: 20px; height: 20px; }
.task-view svg { width: 22px; height: 20px; }

.search {
  flex: none;
  display: flex;
  align-items: center;
  width: 360px;
  padding-left: 15px;
  border: 1px solid #c4c4c4;
  background: #f2f2f2;
}
.search input { flex: 1; margin-left: 14px; font-size: 18px; }
.search input::placeholder { color: #333; opacity: 1; }
.lens { width: 20px; height: 20px; }
.storm { width: 100px; height: 48px; }

.apps-row {
  flex: none;
  width: 1123px;
  margin-left: 4px;
  display: grid;
  grid-template-columns: repeat(19, minmax(0, 1fr));
}
.app { position: relative; }
.app svg { width: 30px; height: 30px; }
.app .gear { width: 24px; height: 24px; }
.app::after {
  content: "";
  position: absolute;
  left: 5px;
  right: 6px;
  bottom: 0;
  height: 3px;
}
.app.open::after { background: #5a91c2; }
.app.open.stacked::after { background: linear-gradient(90deg, #5a91c2 38px, #41688e 38px); }
.app.current { background: #4b4b4b; }
.app.alert { margin-right: 1px; background: #a75f28; }
.app.alert.stacked { background: linear-gradient(90deg, #a75f28 53px, #8f5224 53px, #a75f28 55px); }
.app.alert::after { background: #ff7800; }
.app.current::after, .app.alert::after { left: 0; right: 0; }

.count {
  position: absolute;
  right: 3px;
  bottom: 5px;
  display: flex;
  align-items: center;
  justify-content: center;
  width: 24px;
  height: 20px;
  border: 1px solid #8a8a8a;
  border-radius: 10px;
  background: #2b2b2b;
  font-size: 14px;
  font-weight: 600;
}

.tray { flex: 1; display: flex; justify-content: flex-end; }
.weather { gap: 10px; margin-right: 19px; font-size: 17px; }
.weather svg { width: 30px; height: 30px; }
.caret { width: 40px; }
.caret svg { width: 16px; height: 10px; }
.clock { flex-direction: column; width: 74px; line-height: 23px; }
.notes { position: relative; width: 60px; }
.notes svg { width: 20px; height: 20px; }
.notes .count { right: 9px; width: 20px; }
.peek { margin-left: 5px; width: 6px; border-left: 1px solid #6a6a6a; }

/* Lettering inside icons */
text { text-anchor: middle; fill: #fff; }
.zm { font-size: 10px; font-weight: 700; }
.letter-b { font-size: 16px; font-weight: 700; }
.app-letter { font-size: 13px; font-weight: 700; }
.badge-letter { font-size: 11px; font-weight: 600; fill: #dfe4e6; }
.skype-letter { font-size: 19px; font-weight: 700; }
.nfs { font-size: 11px; font-weight: 700; }
.alert-num { font-size: 12px; }
```
